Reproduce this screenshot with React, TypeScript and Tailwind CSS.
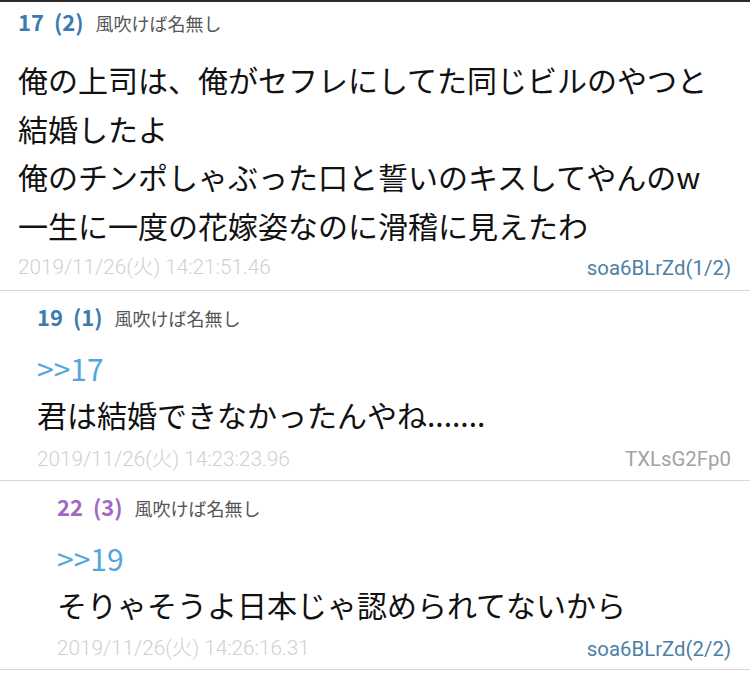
import React from "react";

type Post = {
  no: string;
  count: string;
  color: string;
  indent: string;
  anchor?: string;
  lines: string[];
  date: string;
  id: string;
  idColor: string;
};

const posts: Post[] = [
  {
    no: "17",
    count: "(2)",
    color: "text-[#3b7bb0]",
    indent: "pl-[18px]",
    lines: [
      "俺の上司は、俺がセフレにしてた同じビルのやつと",
      "結婚したよ",
      "俺のチンポしゃぶった口と誓いのキスしてやんのw",
      "一生に一度の花嫁姿なのに滑稽に見えたわ",
    ],
    date: "2019/11/26(火) 14:21:51.46",
    id: "soa6BLrZd(1/2)",
    idColor: "text-[#4d7fa5]",
  },
  {
    no: "19",
    count: "(1)",
    color: "text-[#3b7bb0]",
    indent: "pl-[37px]",
    anchor: ">>17",
    lines: ["君は結婚できなかったんやね......."],
    date: "2019/11/26(火) 14:23:23.96",
    id: "TXLsG2Fp0",
    idColor: "text-[#a3a3a3]",
  },
  {
    no: "22",
    count: "(3)",
    color: "text-[#a467c3]",
    indent: "pl-[57px]",
    anchor: ">>19",
    lines: ["そりゃそうよ日本じゃ認められてないから"],
    date: "2019/11/26(火) 14:26:16.31",
    id: "soa6BLrZd(2/2)",
    idColor: "text-[#4d7fa5]",
  },
];

function PostView({ p, first }: { p: Post; first: boolean }) {
  return (
    <div
      className={`${p.indent} pr-[19px] border-b border-[#d8d8d8] ${
        first ? "pt-[4px] pb-[10px]" : "pt-[10px] pb-[8px]"
      }`}
    >
      <div className="flex items-baseline h-[30px] leading-[30px]">
        <span className={`${p.color} font-bold text-[22px]`}>{p.no}</span>
        <span className={`${p.color} font-bold text-[22px] ml-[10px]`}>{p.count}</span>
        <span className="text-[#555555] text-[18px] ml-[12px]">風吹けば名無し</span>
      </div>
      {p.anchor ? (
        <div className="mt-[16px] text-[30px] leading-[43px] text-[#52a7dd]">{p.anchor}</div>
      ) : null}
      <div className={`${first ? "mt-[19px]" : ""} text-[30px] leading-[48.5px] text-[#111111]`}>
        {p.lines.map((l, i) => (
          <div key={i} className="whitespace-nowrap">
            {l}
          </div>
        ))}
      </div>
      <div
        className={`flex justify-between items-center h-[24px] font-['Roboto','Noto_Sans_CJK_JP',sans-serif] ${
          first ? "mt-[7px]" : "mt-[9px]"
        }`}
      >
        <span className="text-[20.7px] text-[#cdd1d5] font-light">{p.date}</span>
        <span className={`text-[20.4px] ${p.idColor}`}>{p.id}</span>
      </div>
    </div>
  );
}

export default function App() {
  return (
    <div className="w-[750px] h-[673px] bg-white overflow-hidden border-t-2 border-[#2a2a2a] font-['Noto_Sans_CJK_JP','Noto_Sans',sans-serif]">
      {posts.map((p, i) => (
        <PostView key={p.no} p={p} first={i === 0} />
      ))}
    </div>
  );
}
